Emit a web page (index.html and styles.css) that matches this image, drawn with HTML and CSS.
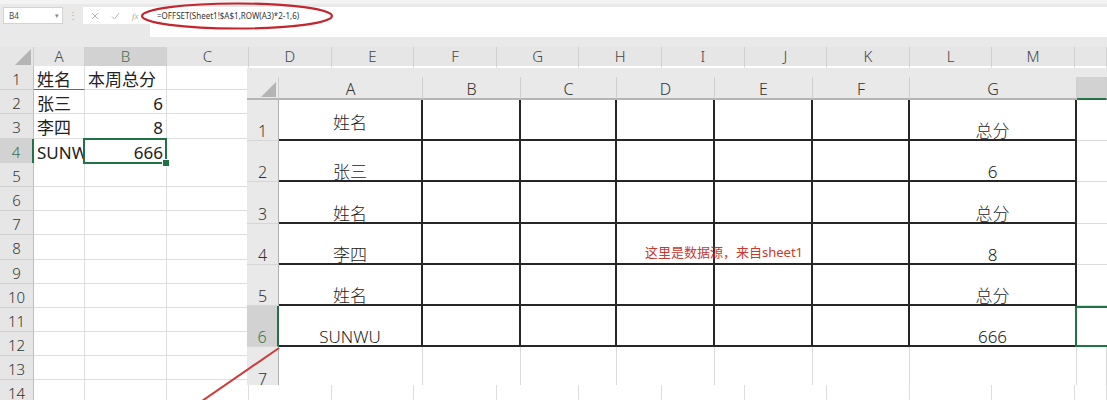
FILE: index.html
```html
<!DOCTYPE html>
<html lang="zh-CN">
<head>
    <meta charset="UTF-8">
    <meta name="viewport" content="width=device-width, initial-scale=1.0">
    <title>OFFSET 隔行取数</title>
    <link rel="stylesheet" href="styles.css">
</head>
<body>
    <!-- Formula bar -->
    <div class="formula-bar">
        <div class="name-box"><span>B4</span><span class="caret">▾</span></div>
        <div class="grip">⋮</div>
        <div class="fx-buttons">
            <svg width="8" height="8" viewBox="0 0 8 8"><path d="M1 1L7 7M7 1L1 7" stroke="#b5b5b5" stroke-width="1"/></svg>
            <svg width="9" height="8" viewBox="0 0 9 8"><path d="M1 4.5L3.5 7L8 1" fill="none" stroke="#b5b5b5" stroke-width="1"/></svg>
            <span class="fx">fx</span>
        </div>
        <div class="formula">=OFFSET(Sheet1!$A$1,ROW(A3)*2-1,6)</div>
    </div>

    <!-- Sheet2 -->
    <div class="sheet">
        <div class="col-head">
            <div class="corner"></div>
            <div>A</div><div class="sel">B</div><div>C</div><div>D</div><div>E</div><div>F</div><div>G</div>
            <div>H</div><div>I</div><div>J</div><div>K</div><div>L</div><div>M</div><div></div>
        </div>
        <div class="row"><div class="rh">1</div><div class="ul">姓名</div><div>本周总分</div><div></div><div></div><div></div><div></div><div></div><div></div><div></div><div></div><div></div><div></div><div></div><div></div></div>
        <div class="row"><div class="rh">2</div><div>张三</div><div class="num">6</div><div></div><div></div><div></div><div></div><div></div><div></div><div></div><div></div><div></div><div></div><div></div><div></div></div>
        <div class="row"><div class="rh">3</div><div>李四</div><div class="num">8</div><div></div><div></div><div></div><div></div><div></div><div></div><div></div><div></div><div></div><div></div><div></div><div></div></div>
        <div class="row"><div class="rh sel">4</div><div>SUNWU</div><div class="num active">666</div><div></div><div></div><div></div><div></div><div></div><div></div><div></div><div></div><div></div><div></div><div></div><div></div></div>
        <div class="row"><div class="rh">5</div><div></div><div></div><div></div><div></div><div></div><div></div><div></div><div></div><div></div><div></div><div></div><div></div><div></div><div></div></div>
        <div class="row"><div class="rh">6</div><div></div><div></div><div></div><div></div><div></div><div></div><div></div><div></div><div></div><div></div><div></div><div></div><div></div><div></div></div>
        <div class="row"><div class="rh">7</div><div></div><div></div><div></div><div></div><div></div><div></div><div></div><div></div><div></div><div></div><div></div><div></div><div></div><div></div></div>
        <div class="row"><div class="rh">8</div><div></div><div></div><div></div><div></div><div></div><div></div><div></div><div></div><div></div><div></div><div></div><div></div><div></div><div></div></div>
        <div class="row"><div class="rh">9</div><div></div><div></div><div></div><div></div><div></div><div></div><div></div><div></div><div></div><div></div><div></div><div></div><div></div><div></div></div>
        <div class="row"><div class="rh">10</div><div></div><div></div><div></div><div></div><div></div><div></div><div></div><div></div><div></div><div></div><div></div><div></div><div></div><div></div></div>
        <div class="row"><div class="rh">11</div><div></div><div></div><div></div><div></div><div></div><div></div><div></div><div></div><div></div><div></div><div></div><div></div><div></div><div></div></div>
        <div class="row"><div class="rh">12</div><div></div><div></div><div></div><div></div><div></div><div></div><div></div><div></div><div></div><div></div><div></div><div></div><div></div><div></div></div>
        <div class="row"><div class="rh">13</div><div></div><div></div><div></div><div></div><div></div><div></div><div></div><div></div><div></div><div></div><div></div><div></div><div></div><div></div></div>
        <div class="row"><div class="rh">14</div><div></div><div></div><div></div><div></div><div></div><div></div><div></div><div></div><div></div><div></div><div></div><div></div><div></div><div></div></div>
    </div>

    <!-- Pasted screenshot of the result sheet -->
    <div class="picture">
        <div class="pic-head">
            <div class="corner"></div>
            <div>A</div><div>B</div><div>C</div><div>D</div><div>E</div><div>F</div><div>G</div><div class="sel"></div>
        </div>
        <div class="pic-body">
            <div class="pic-row"><div class="prh">1</div><div class="mid">姓名</div><div></div><div></div><div></div><div></div><div></div><div>总分</div><div class="x"></div></div>
            <div class="pic-row"><div class="prh">2</div><div>张三</div><div></div><div></div><div></div><div></div><div></div><div>6</div><div class="x"></div></div>
            <div class="pic-row"><div class="prh">3</div><div>姓名</div><div></div><div></div><div></div><div></div><div></div><div>总分</div><div class="x"></div></div>
            <div class="pic-row"><div class="prh">4</div><div>李四</div><div></div><div></div><div class="note">这里是数据源，来自sheet1</div><div></div><div></div><div>8</div><div class="x"></div></div>
            <div class="pic-row"><div class="prh">5</div><div>姓名</div><div></div><div></div><div></div><div></div><div></div><div>总分</div><div class="x"></div></div>
            <div class="pic-row"><div class="prh sel">6</div><div>SUNWU</div><div></div><div></div><div></div><div></div><div></div><div>666</div><div class="x hsel"></div></div>
            <div class="pic-row tail"><div class="prh">7</div><div></div><div></div><div></div><div></div><div></div><div></div><div></div><div></div></div>
        </div>
    </div>

    <!-- Hand-drawn red marks -->
    <svg class="marks" width="1107" height="400" viewBox="0 0 1107 400">
        <ellipse cx="237" cy="16" rx="95" ry="12.5" fill="none" stroke="#c4262e" stroke-width="2.2"/>
        <line x1="202" y1="401" x2="279" y2="348" stroke="#cf3a3a" stroke-width="2"/>
    </svg>
</body>
</html>
```

FILE: styles.css
```css
* {
    box-sizing: border-box;
    margin: 0;
    padding: 0;
}
body {
    position: relative;
    width: 1107px;
    height: 400px;
    overflow: hidden;
    background-color: #e6e6e6;
    font-family: 'Noto Sans', 'Noto Sans CJK SC', sans-serif;
    color: #222;
}

/* formula bar */
.formula-bar {
    display: flex;
    align-items: flex-start;
    height: 47px;
    padding: 3px 0 0 3px;
    background-color: #e9e9e9;
    border-top: 4px solid #f3f3f3;
}
.name-box {
    display: flex;
    align-items: center;
    justify-content: space-between;
    width: 60px;
    height: 17px;
    padding: 0 3px 0 5px;
    background-color: #fff;
    border: 1px solid #d3d3d3;
    font-size: 8px;
    color: #444;
}
.name-box .caret {
    font-size: 7px;
    color: #888;
}
.grip {
    width: 20px;
    line-height: 17px;
    text-align: center;
    font-size: 10px;
    color: #aaa;
}
.fx-buttons {
    display: flex;
    align-items: center;
    gap: 12px;
    width: 67px;
    height: 17px;
    padding-left: 8px;
    background-color: #fff;
}
.fx-buttons .fx {
    font-family: 'Liberation Serif', serif;
    font-style: italic;
    font-size: 9px;
    color: #aaa;
}
.formula {
    flex: 1;
    height: 30px;
    padding: 4px 7px;
    background-color: #fff;
    font-size: 8px;
    line-height: 10px;
    color: #333;
}

/* outer sheet grid */
.sheet {
    --cols: 34px 51px 82px 82px repeat(10, 82.6px) 1fr;
}
.col-head,
.row {
    display: grid;
    grid-template-columns: var(--cols);
}
.col-head {
    height: 19px;
}
.col-head > div {
    background-color: #e6e6e6;
    border-right: 1px solid #d0d0d0;
    border-bottom: 1px solid #c4c4c4;
    text-align: center;
    font-size: 15px;
    line-height: 18px;
    font-weight: 300;
    color: #444;
}
.col-head > .sel,
.pic-head > .sel {
    background-color: #d2d2d2;
    border-bottom: 2px solid #217346;
    color: #3a6e50;
}
.corner {
    display: flex;
    justify-content: flex-end;
    align-items: flex-end;
    padding: 2px;
}
.corner::after {
    content: '';
    width: 16px;
    height: 16px;
    background-color: #b4b4b4;
    clip-path: polygon(100% 0, 100% 100%, 0 100%);
}
.row {
    height: 24.2px;
}
.row > div {
    background-color: #fff;
    border-right: 1px solid #dedede;
    border-bottom: 1px solid #dedede;
    padding: 4px 3px 0;
    font-size: 17px;
    line-height: 20px;
    white-space: nowrap;
    overflow: hidden;
}
.row > .rh {
    padding: 3px 0 0;
    background-color: #e6e6e6;
    border-right: 1px solid #bdbdbd;
    border-bottom-color: #d0d0d0;
    text-align: center;
    font-size: 15px;
    font-weight: 300;
    color: #333;
}
.row > .rh.sel {
    background-color: #d2d2d2;
    border-right: 2px solid #217346;
    color: #3a6e50;
}
.row > .ul {
    border-bottom-color: #6b6b6b;
}
.row > .num {
    text-align: right;
}
.row > .active {
    position: relative;
    overflow: visible;
}
.active::after {
    content: '';
    position: absolute;
    left: -2px;
    top: -1px;
    right: -1px;
    bottom: -1px;
    border: 2px solid #217346;
}
.active::before {
    content: '';
    position: absolute;
    right: -4px;
    bottom: -4px;
    width: 6px;
    height: 6px;
    background-color: #217346;
    border: 1px solid #fff;
    z-index: 1;
}

/* pasted picture */
.picture {
    --cols: 32px 144px 98px 96px 98px 98px 97px 167px 1fr;
    position: absolute;
    left: 247px;
    top: 68px;
    width: 860px;
    height: 317px;
    overflow: hidden;
    padding-top: 9px;
    background-color: #e9e9e9;
    font-weight: 300;
}
.pic-head,
.pic-row {
    display: grid;
    grid-template-columns: var(--cols);
}
.pic-head {
    height: 23px;
}
.pic-head > div {
    padding-top: 4px;
    border-right: 1px solid #cfcfcf;
    border-bottom: 2px solid #b5b5b5;
    text-align: center;
    font-size: 16px;
    line-height: 17px;
    color: #333;
}
.pic-head > .corner {
    padding: 0 2px 1px 0;
}
.pic-head > .corner::after {
    width: 15px;
    height: 15px;
}
.pic-body {
    background-color: #fff;
}
.pic-row {
    height: 41.2px;
}
.pic-row > div {
    display: flex;
    align-items: flex-end;
    justify-content: center;
    border-right: 2px solid #262626;
    border-bottom: 2px solid #262626;
    font-size: 17px;
    line-height: 16px;
    color: #222;
    white-space: nowrap;
}
.pic-row > .prh {
    padding-bottom: 1px;
    background-color: #e9e9e9;
    border-right: 1px solid #b0b0b0;
    border-bottom: 1px solid #d6d6d6;
    font-size: 16px;
    color: #333;
}
.pic-row > .prh.sel {
    background-color: #d2d2d2;
    border-right: 2px solid #217346;
    color: #3a7a55;
}
.pic-row > .mid {
    align-items: center;
    padding-top: 6px;
}
.pic-row > .x {
    border-right: 0;
    border-bottom: 1px solid #dcdcdc;
}
.pic-row > .hsel {
    margin-left: -2px;
    border: 2px solid #217346;
    border-right: 0;
}
.pic-row > .note {
    justify-content: flex-start;
    padding: 0 0 3px 28px;
    font-size: 13px;
    font-weight: 400;
    color: #c8382e;
}
.pic-row.tail > div {
    border-right: 1px solid #dadada;
    border-bottom: 0;
}
.pic-row.tail > .prh {
    border-right: 1px solid #b0b0b0;
}

/* annotation */
.marks {
    position: absolute;
    left: 0;
    top: 0;
    pointer-events: none;
}
```
